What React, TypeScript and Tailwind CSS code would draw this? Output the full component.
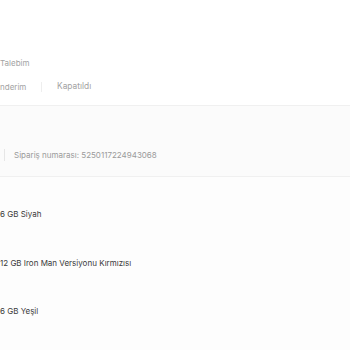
export default function App() {
  const font = { fontFamily: "Inter, 'Noto Sans', sans-serif" };
  return (
    <div className="w-[350px] h-[350px] overflow-hidden bg-white" style={font}>
      <div className="h-[51px]" />
      <div className="h-[24px] flex items-center text-[8px] text-[#a3a3a3]">
        <span>Talebim</span>
      </div>
      <div className="h-[23px] flex items-center text-[8px] text-[#a3a3a3]">
        <span className="w-[25px]">nderim</span>
        <span className="ml-[16px] w-px h-[10px] bg-[#eeeeee]" />
        <span className="ml-[15px] text-[8.4px]">Kapatıldı</span>
      </div>
      <div className="h-[8px] border-b border-[#f0f0f0]" />
      <div className="h-[71px] bg-[#fbfbfb] border-b border-[#f0f0f0] flex items-center text-[8px] text-[#9a9a9a] pt-[28px]">
        <span className="ml-[4px] w-px h-[12px] bg-[#e6e6e6]" />
        <span className="ml-[9px]">Sipariş numarası: 5250117224943068</span>
      </div>
      <div className="bg-[#fdfdfd] h-[200px] text-[8px] text-[#3a3a3a]">
        <div className="h-[31px]" />
        <div className="h-[12px] flex items-center">6 GB Siyah</div>
        <div className="h-[37px]" />
        <div className="h-[12px] flex items-center">12 GB Iron Man Versiyonu Kırmızısı</div>
        <div className="h-[36px]" />
        <div className="h-[12px] flex items-center">6 GB Yeşil</div>
      </div>
    </div>
  );
}
